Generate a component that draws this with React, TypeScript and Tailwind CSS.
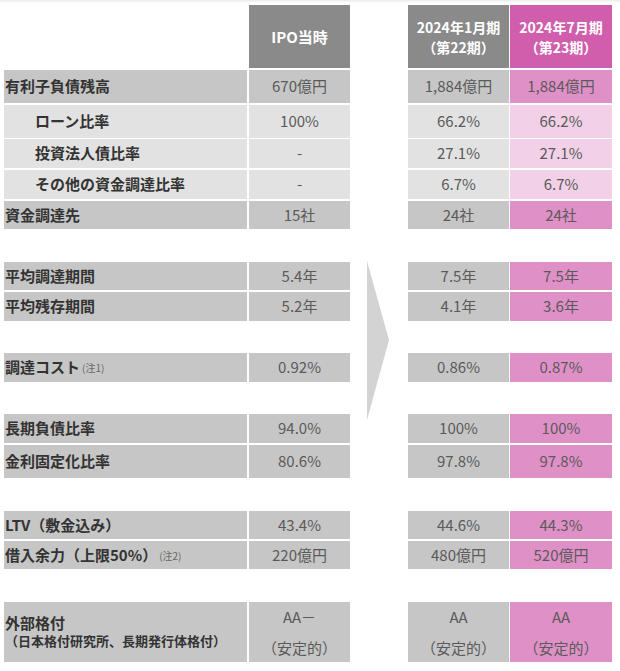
import React from 'react';

type Row = {
  label: React.ReactNode;
  ipo: React.ReactNode;
  jan: React.ReactNode;
  jul: React.ReactNode;
  h: string;
  mt: string;
  sub?: boolean;
};

const note = (t: string) => <span className="ml-[2px] text-[10px] font-normal text-[#666]">{t}</span>;

const rating = (t: string) => (
  <div className="flex flex-col items-center leading-[31px]">
    <span>{t}</span>
    <span>（安定的）</span>
  </div>
);

const rows: Row[] = [
  { label: '有利子負債残高', ipo: '670億円', jan: '1,884億円', jul: '1,884億円', h: 'h-[33px]', mt: 'mt-[2px]' },
  { label: 'ローン比率', ipo: '100%', jan: '66.2%', jul: '66.2%', h: 'h-[33px]', mt: 'mt-[2px]', sub: true },
  { label: '投資法人債比率', ipo: '-', jan: '27.1%', jul: '27.1%', h: 'h-[29px]', mt: 'mt-[1px]', sub: true },
  { label: 'その他の資金調達比率', ipo: '-', jan: '6.7%', jul: '6.7%', h: 'h-[29px]', mt: 'mt-[2px]', sub: true },
  { label: '資金調達先', ipo: '15社', jan: '24社', jul: '24社', h: 'h-[28px]', mt: 'mt-[2px]' },
  { label: '平均調達期間', ipo: '5.4年', jan: '7.5年', jul: '7.5年', h: 'h-[28px]', mt: 'mt-[33px]' },
  { label: '平均残存期間', ipo: '5.2年', jan: '4.1年', jul: '3.6年', h: 'h-[29px]', mt: 'mt-[2px]' },
  {
    label: (
      <>
        調達コスト{note('(注1)')}
      </>
    ),
    ipo: '0.92%',
    jan: '0.86%',
    jul: '0.87%',
    h: 'h-[29px]',
    mt: 'mt-[32px]',
  },
  { label: '長期負債比率', ipo: '94.0%', jan: '100%', jul: '100%', h: 'h-[29px]', mt: 'mt-[32px]' },
  { label: '金利固定化比率', ipo: '80.6%', jan: '97.8%', jul: '97.8%', h: 'h-[33px]', mt: 'mt-[2px]' },
  { label: 'LTV（敷金込み）', ipo: '43.4%', jan: '44.6%', jul: '44.3%', h: 'h-[28px]', mt: 'mt-[33px]' },
  {
    label: (
      <>
        借入余力（上限50%）{note('(注2)')}
      </>
    ),
    ipo: '220億円',
    jan: '480億円',
    jul: '520億円',
    h: 'h-[28px]',
    mt: 'mt-[2px]',
  },
  {
    label: (
      <div className="flex flex-col leading-[18px]">
        <span>外部格付</span>
        <span className="text-[13px]">（日本格付研究所、長期発行体格付）</span>
      </div>
    ),
    ipo: rating('AA－'),
    jan: rating('AA'),
    jul: rating('AA'),
    h: 'h-[60px]',
    mt: 'mt-[33px]',
  },
];

const valueCls = 'flex items-center justify-center text-[15px] text-[#5a5a5a]';
const headCls = 'flex h-[63px] flex-col items-center justify-center text-center font-bold leading-[20px] text-white';

const App: React.FC = () => {
  return (
    <div className="h-[671px] w-[620px] bg-white font-['Noto_Sans_CJK_JP',sans-serif]">
      <div className="h-[3px] bg-gradient-to-b from-[#ececec] to-white" />
      <div className="flex pl-[4px] pt-[2px]">
        {/* left table: labels + IPO */}
        <div className="flex w-[346px] flex-col">
          <div className="flex">
            <div className="w-[243px]" />
            <div className={`ml-[2px] w-[101px] bg-[#8a8a8a] text-[15px] ${headCls}`}>IPO当時</div>
          </div>
          {rows.map((r, i) => (
            <div key={i} className={`flex ${r.mt} ${r.h}`}>
              <div
                className={`flex w-[243px] items-center text-[15px] font-bold text-[#333] ${
                  r.sub ? 'bg-[#e2e2e2] pl-[31px]' : 'bg-[#c6c6c6] pl-[1px]'
                }`}
              >
                {r.label}
              </div>
              <div className={`ml-[2px] w-[101px] ${r.sub ? 'bg-[#e2e2e2]' : 'bg-[#c6c6c6]'} ${valueCls}`}>{r.ipo}</div>
            </div>
          ))}
        </div>

        {/* arrow */}
        <div className="w-[58px] pt-[256px]">
          <svg width="58" height="159" viewBox="0 0 58 159">
            <polygon points="17,0 39,79 17,159" fill="#d3d3d3" />
          </svg>
        </div>

        {/* right table: 22nd / 23rd periods */}
        <div className="flex w-[204px] flex-col">
          <div className="flex">
            <div className={`w-[101px] bg-[#8a8a8a] text-[14px] ${headCls}`}>
              <span>2024年1月期</span>
              <span>（第22期）</span>
            </div>
            <div className={`ml-[1px] w-[102px] bg-[#d15eac] text-[14px] ${headCls}`}>
              <span>2024年7月期</span>
              <span>（第23期）</span>
            </div>
          </div>
          {rows.map((r, i) => (
            <div key={i} className={`flex ${r.mt} ${r.h}`}>
              <div className={`w-[101px] ${r.sub ? 'bg-[#e2e2e2]' : 'bg-[#c6c6c6]'} ${valueCls}`}>{r.jan}</div>
              <div className={`ml-[1px] w-[102px] ${r.sub ? 'bg-[#f2d1e8]' : 'bg-[#df90c7]'} ${valueCls}`}>{r.jul}</div>
            </div>
          ))}
        </div>
      </div>
    </div>
  );
};

export default App;
